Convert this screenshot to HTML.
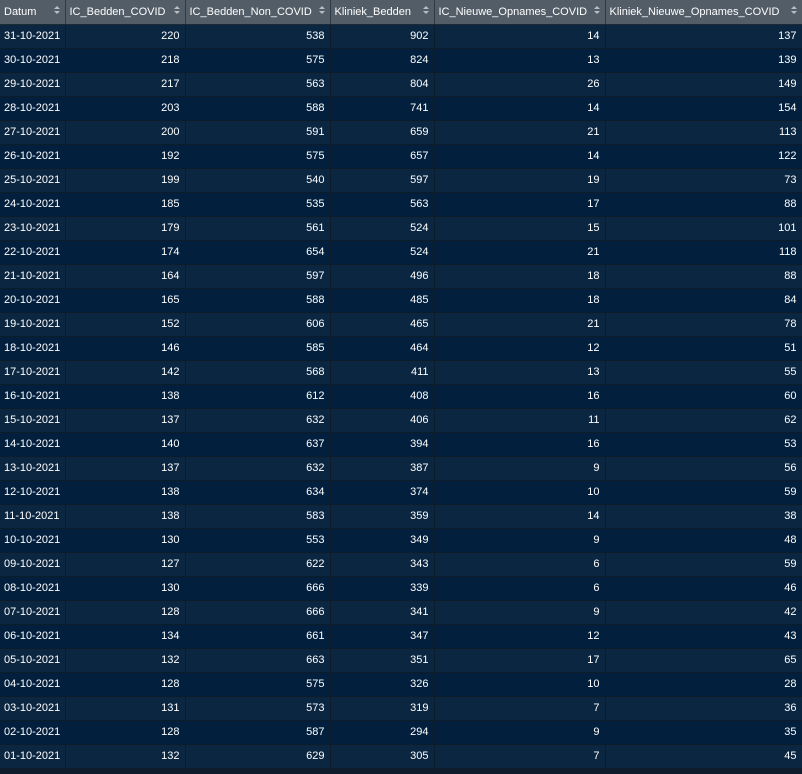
<!DOCTYPE html>
<html><head><meta charset="utf-8"><style>
html,body{margin:0;padding:0;width:802px;height:774px;background:#0f1c2b;overflow:hidden}
table{border-collapse:collapse;table-layout:fixed;width:802px;font-family:"Liberation Sans",sans-serif;font-size:11px;color:#fff}
th,td{height:24px;padding:0 5px 0 4px;border-right:1px solid #0e1b28;border-bottom:1px solid #0e1b28;box-sizing:border-box;white-space:nowrap;overflow:hidden}
th{background:#525d67;font-weight:normal;text-align:left;position:relative;border-right:1px solid #2e3a45;border-bottom:1px solid #1d2a36}
th::after{content:"";position:absolute;right:5px;top:6px;width:0;height:0;border-left:3px solid transparent;border-right:3px solid transparent;border-bottom:3px solid #b8bec4}
th::before{content:"";position:absolute;right:5px;top:11px;width:0;height:0;border-left:3px solid transparent;border-right:3px solid transparent;border-top:3px solid #b8bec4}
td{text-align:right}
td:first-child{text-align:left}
tr:nth-child(odd) td{background:#0b2641}
tr:nth-child(even) td{background:#02203d}
</style></head><body>
<table>
<colgroup><col style="width:65px"><col style="width:120px"><col style="width:145px"><col style="width:104px"><col style="width:171px"><col style="width:197px"></colgroup>
<thead><tr><th>Datum</th><th>IC_Bedden_COVID</th><th>IC_Bedden_Non_COVID</th><th>Kliniek_Bedden</th><th>IC_Nieuwe_Opnames_COVID</th><th>Kliniek_Nieuwe_Opnames_COVID</th></tr></thead>
<tbody>
<tr><td>31-10-2021</td><td>220</td><td>538</td><td>902</td><td>14</td><td>137</td></tr>
<tr><td>30-10-2021</td><td>218</td><td>575</td><td>824</td><td>13</td><td>139</td></tr>
<tr><td>29-10-2021</td><td>217</td><td>563</td><td>804</td><td>26</td><td>149</td></tr>
<tr><td>28-10-2021</td><td>203</td><td>588</td><td>741</td><td>14</td><td>154</td></tr>
<tr><td>27-10-2021</td><td>200</td><td>591</td><td>659</td><td>21</td><td>113</td></tr>
<tr><td>26-10-2021</td><td>192</td><td>575</td><td>657</td><td>14</td><td>122</td></tr>
<tr><td>25-10-2021</td><td>199</td><td>540</td><td>597</td><td>19</td><td>73</td></tr>
<tr><td>24-10-2021</td><td>185</td><td>535</td><td>563</td><td>17</td><td>88</td></tr>
<tr><td>23-10-2021</td><td>179</td><td>561</td><td>524</td><td>15</td><td>101</td></tr>
<tr><td>22-10-2021</td><td>174</td><td>654</td><td>524</td><td>21</td><td>118</td></tr>
<tr><td>21-10-2021</td><td>164</td><td>597</td><td>496</td><td>18</td><td>88</td></tr>
<tr><td>20-10-2021</td><td>165</td><td>588</td><td>485</td><td>18</td><td>84</td></tr>
<tr><td>19-10-2021</td><td>152</td><td>606</td><td>465</td><td>21</td><td>78</td></tr>
<tr><td>18-10-2021</td><td>146</td><td>585</td><td>464</td><td>12</td><td>51</td></tr>
<tr><td>17-10-2021</td><td>142</td><td>568</td><td>411</td><td>13</td><td>55</td></tr>
<tr><td>16-10-2021</td><td>138</td><td>612</td><td>408</td><td>16</td><td>60</td></tr>
<tr><td>15-10-2021</td><td>137</td><td>632</td><td>406</td><td>11</td><td>62</td></tr>
<tr><td>14-10-2021</td><td>140</td><td>637</td><td>394</td><td>16</td><td>53</td></tr>
<tr><td>13-10-2021</td><td>137</td><td>632</td><td>387</td><td>9</td><td>56</td></tr>
<tr><td>12-10-2021</td><td>138</td><td>634</td><td>374</td><td>10</td><td>59</td></tr>
<tr><td>11-10-2021</td><td>138</td><td>583</td><td>359</td><td>14</td><td>38</td></tr>
<tr><td>10-10-2021</td><td>130</td><td>553</td><td>349</td><td>9</td><td>48</td></tr>
<tr><td>09-10-2021</td><td>127</td><td>622</td><td>343</td><td>6</td><td>59</td></tr>
<tr><td>08-10-2021</td><td>130</td><td>666</td><td>339</td><td>6</td><td>46</td></tr>
<tr><td>07-10-2021</td><td>128</td><td>666</td><td>341</td><td>9</td><td>42</td></tr>
<tr><td>06-10-2021</td><td>134</td><td>661</td><td>347</td><td>12</td><td>43</td></tr>
<tr><td>05-10-2021</td><td>132</td><td>663</td><td>351</td><td>17</td><td>65</td></tr>
<tr><td>04-10-2021</td><td>128</td><td>575</td><td>326</td><td>10</td><td>28</td></tr>
<tr><td>03-10-2021</td><td>131</td><td>573</td><td>319</td><td>7</td><td>36</td></tr>
<tr><td>02-10-2021</td><td>128</td><td>587</td><td>294</td><td>9</td><td>35</td></tr>
<tr><td>01-10-2021</td><td>132</td><td>629</td><td>305</td><td>7</td><td>45</td></tr>
</tbody></table>
</body></html>
